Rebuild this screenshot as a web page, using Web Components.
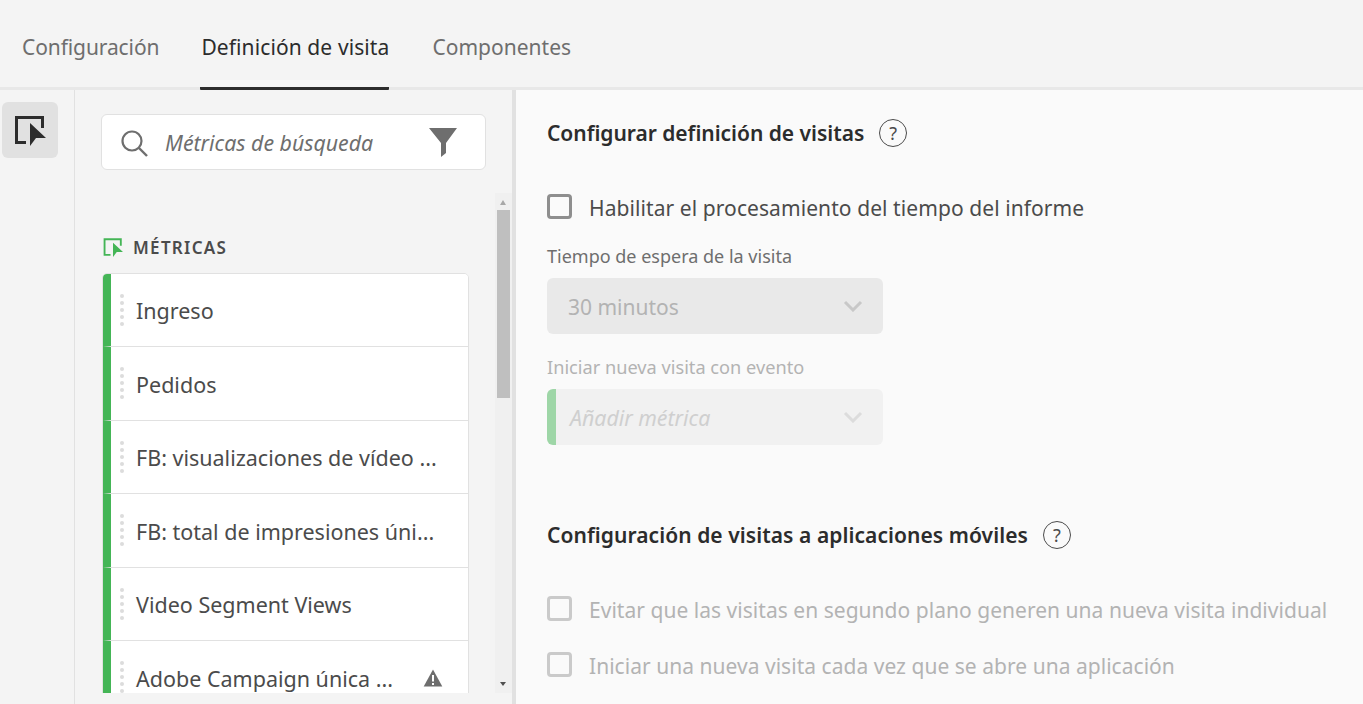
<!DOCTYPE html>
<html lang="es"><head><meta charset="utf-8">
<style>
html,body{margin:0;padding:0;height:100%;overflow:hidden}
body{font-family:"Noto Sans","Open Sans",sans-serif;background:#fafafa;color:#2c2c2c}
</style></head><body>
<app-shell>
  <tab-bar></tab-bar>
  <div style="display:flex;height:614px;overflow:hidden">
    <side-rail></side-rail>
    <metric-panel></metric-panel>
    <settings-pane></settings-pane>
  </div>
</app-shell>
<script>
const FONT='"Noto Sans","Open Sans",sans-serif';
const cursorIcon=(c,s)=>`<svg width="${s}" height="${s}" viewBox="0 0 32 32" style="display:block;flex:none"><path d="M12 28.500H2.500V3.500H28.500V14" fill="none" stroke="${c}" stroke-width="3"/><path d="M16 9V32L22 24H32Z" fill="${c}"/></svg>`;
class AppShell extends HTMLElement{constructor(){super();this.attachShadow({mode:'open'}).innerHTML=`<style>:host{display:block;height:704px;overflow:hidden}</style><slot></slot>`}}
class TabBar extends HTMLElement{constructor(){super();this.attachShadow({mode:'open'}).innerHTML=`<style>
:host{display:flex;height:90px;box-sizing:border-box;background:#f4f4f4;border-bottom:3px solid #e8e8e8;padding-left:22px;gap:42px;font:21px/1 ${FONT};letter-spacing:-.1px}
div{height:90px;box-sizing:border-box;padding-top:37px;color:#6e6e6e;white-space:nowrap}
.a{color:#2c2c2c;border-bottom:3px solid #2c2c2c;margin:0 1px 0 -1px;padding-left:1px;border-radius:0 0 1px 1px;letter-spacing:.1px}
</style><div>Configuración</div><div class="a">Definición de visita</div><div style="letter-spacing:.02px">Componentes</div>`}}
class SideRail extends HTMLElement{constructor(){super();this.attachShadow({mode:'open'}).innerHTML=`<style>
:host{display:block;width:75px;flex:none;box-sizing:border-box;background:#f4f4f4;border-right:1px solid #e1e1e1;padding:12px 0 0 2px}
div{width:56px;height:56px;border-radius:6px;background:#e1e1e1;display:flex;align-items:center;justify-content:center}
</style><div>${cursorIcon('#2c2c2c',32)}</div>`}}
class MetricRow extends HTMLElement{
constructor(){super();this.attachShadow({mode:'open'}).innerHTML=`<style>
:host{display:flex;align-items:center;box-sizing:border-box;height:73.5px;border-bottom:1px solid #e1e1e1;background:#fff;border-left:8px solid #44b556;padding-left:9px;flex:none;font:21.500px/1 ${FONT};color:#4b4b4b;position:relative}
.h{display:grid;grid-template-columns:4px;gap:3px;margin-right:12px}
.h i{width:4px;height:4px;background:#dcdcdc;border-radius:50%}
.t{white-space:nowrap;flex:1;padding-top:2px}
svg{position:absolute;right:25px;top:28px;display:none}
:host([warn]) svg{display:block}
</style><div class="h"><i></i><i></i><i></i><i></i><i></i></div><div class="t"><slot></slot></div><svg width="20" height="18" viewBox="0 0 20 18"><path d="M10 .5 19.300 17.500H.7Z" fill="#6e6e6e"/><path d="M9 6h2v6.500H9zM9 14h2v2H9z" fill="#fff"/></svg>`}}
class MetricPanel extends HTMLElement{constructor(){super();this.attachShadow({mode:'open'}).innerHTML=`<style>
:host{display:block;width:437px;flex:none;box-sizing:border-box;background:#f4f4f4;padding:24px 0 0 26px;overflow:hidden}
.s{display:flex;align-items:center;box-sizing:border-box;width:385px;height:56px;background:#fff;border:1px solid #e1e1e1;border-radius:6px;padding:0 28px 0 18px;font:italic 21.300px/1 ${FONT};color:#6e6e6e}
.s span{flex:1;margin-left:17px;white-space:nowrap;padding-top:2px}
.s svg{margin-top:2px}
.s svg.f{margin-top:0}
.m{display:flex;margin-top:23px;height:500px}
.l{width:368px;padding-top:44px;flex:none;overflow:hidden;height:456px;margin-right:26px}
.hd{display:flex;align-items:center;gap:10px;font:600 17px/1 ${FONT};letter-spacing:1.3px;color:#4b4b4b;height:20px;margin-left:2px}
.rows{margin-top:16px;border:1px solid #e1e1e1;border-radius:5px 5px 0 0;overflow:hidden;margin-left:1px;display:flex;flex-direction:column}
::slotted(metric-row:first-child){height:73px}
.b{width:17px;height:500px;background:#f0f0f0;flex:none;position:relative}
.up,.dn{width:0;height:0;border-left:3.500px solid transparent;border-right:3.500px solid transparent;position:absolute;left:5px}
.up{border-bottom:5px solid #a8a8a8;top:7px}.dn{border-top:4px solid #505050;top:489px}
.th{position:absolute;top:17px;left:2px;width:13px;height:188px;background:#bfbfbf}
</style>
<div class="s"><svg width="28" height="28" viewBox="0 0 28 28"><circle cx="12" cy="12" r="9.500" fill="none" stroke="#6e6e6e" stroke-width="2.200"/><path d="M19 19l8 8" stroke="#6e6e6e" stroke-width="2.400" fill="none"/></svg><span>Métricas de búsqueda</span><svg class="f" width="28" height="29" viewBox="0 0 28 29"><path d="M0 0H28L17 15V25L12 29V15Z" fill="#6e6e6e"/></svg></div>
<div class="m"><div class="l"><div class="hd">${cursorIcon('#44b556',20)}<span>MÉTRICAS</span></div><div class="rows"><slot></slot></div></div>
<div class="b"><i class="up"></i><i class="th"></i><i class="dn"></i></div></div>`}}
class HelpIcon extends HTMLElement{constructor(){super();this.attachShadow({mode:'open'}).innerHTML=`<style>:host{display:inline-flex;width:28px;height:28px;box-sizing:border-box;border:1.500px solid #4b4b4b;border-radius:50%;align-items:center;justify-content:center;font:18px/1 ${FONT};color:#4b4b4b;flex:none}</style>?`}}
class CheckRow extends HTMLElement{constructor(){super();this.attachShadow({mode:'open'}).innerHTML=`<style>
:host{display:flex;align-items:center;gap:17px;font:21px/1 ${FONT};letter-spacing:.03px;color:#4b4b4b;white-space:nowrap}
:host([disabled]){color:#b3b3b3}
i{box-sizing:border-box;width:25px;height:25px;border:3px solid #8e8e8e;border-radius:4px;flex:none}
:host([disabled]) i{border-color:#cacaca}
span{padding-top:3px}
</style><i></i><span><slot></slot></span>`}}
class SelectBox extends HTMLElement{constructor(){super();this.attachShadow({mode:'open'}).innerHTML=`<style>
:host{display:flex;align-items:center;box-sizing:border-box;width:336px;height:56px;border-radius:6px;background:#e9e9e9;padding:0 20px 0 21px;font:21px/1 ${FONT};color:#b3b3b3;overflow:hidden}
:host([metric]){background:#f1f1f1;border-left:9px solid #9ed6a7;padding-left:14px;font-style:italic;color:#cfcfcf;font-size:21.300px}
span{flex:1;white-space:nowrap;padding-top:2px}
:host([metric]) span{padding-top:0}
path{stroke:#c8c8c8}
:host([metric]) path{stroke:#dcdcdc}
</style><span><slot></slot></span><svg width="20" height="12" viewBox="0 0 20 12"><path d="M2 2l8 8 8-8" fill="none" stroke-width="3"/></svg>`}}
class SettingsPane extends HTMLElement{constructor(){super();this.attachShadow({mode:'open'}).innerHTML=`<style>
:host{display:block;flex:1;box-sizing:border-box;background:#fafafa;border-left:4px solid #e1e1e1;padding:29px 0 0 31px;overflow:hidden}
h2{display:flex;align-items:center;gap:15px;margin:0;font:600 21px/28px ${FONT};color:#2c2c2c;height:28px}
.lb{font:18px/1 ${FONT};color:#6e6e6e;white-space:nowrap}
.dis{color:#b3b3b3;font-size:18.200px}
</style>
<h2><span style="letter-spacing:-.03px">Configurar definición de visitas</span><help-icon></help-icon></h2>
<check-row style="margin-top:47px;letter-spacing:.08px">Habilitar el procesamiento del tiempo del informe</check-row>
<div class="lb" style="margin-top:28px">Tiempo de espera de la visita</div>
<select-box style="margin-top:13px">30 minutos</select-box>
<div class="lb dis" style="margin-top:24px">Iniciar nueva visita con evento</div>
<select-box metric style="margin-top:13px">Añadir métrica</select-box>
<h2 style="margin-top:76px"><span style="letter-spacing:.06px">Configuración de visitas a aplicaciones móviles</span><help-icon></help-icon></h2>
<check-row disabled style="margin-top:47px">Evitar que las visitas en segundo plano generen una nueva visita individual</check-row>
<check-row disabled style="margin-top:31px">Iniciar una nueva visita cada vez que se abre una aplicación</check-row>`}}
customElements.define('app-shell',AppShell);
customElements.define('tab-bar',TabBar);
customElements.define('side-rail',SideRail);
customElements.define('metric-row',MetricRow);
customElements.define('metric-panel',MetricPanel);
customElements.define('help-icon',HelpIcon);
customElements.define('check-row',CheckRow);
customElements.define('select-box',SelectBox);
customElements.define('settings-pane',SettingsPane);
document.querySelector('metric-panel').innerHTML=['Ingreso','Pedidos','FB: visualizaciones de vídeo ...','FB: total de impresiones úni...','Video Segment Views','Adobe Campaign única ...'].map((t,i)=>`<metric-row${i==5?' warn':''}>${t}</metric-row>`).join('');
</script>
</body></html>
